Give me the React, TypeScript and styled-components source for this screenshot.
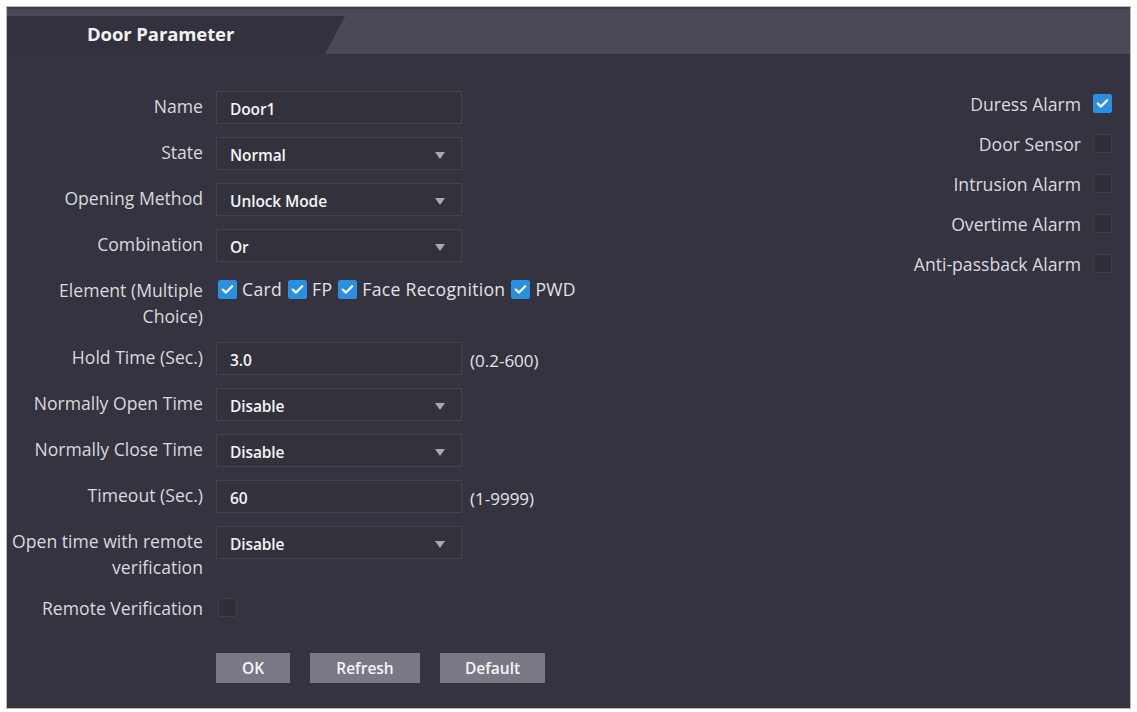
import React from "react";
import styled, { createGlobalStyle } from "styled-components";

const GlobalStyle = createGlobalStyle`
  html, body {
    margin: 0;
    padding: 0;
    background: #ffffff;
  }
  body {
    font-family: "Open Sans", "Liberation Sans", sans-serif;
  }
`;

type Field =
  | { kind: "text"; label: string; value: string; hint?: string }
  | { kind: "select"; label: string; value: string }
  | { kind: "checks"; label: string; items: string[] }
  | { kind: "check"; label: string; checked: boolean };

const fields: Field[] = [
  { kind: "text", label: "Name", value: "Door1" },
  { kind: "select", label: "State", value: "Normal" },
  { kind: "select", label: "Opening Method", value: "Unlock Mode" },
  { kind: "select", label: "Combination", value: "Or" },
  {
    kind: "checks",
    label: "Element (Multiple Choice)",
    items: ["Card", "FP", "Face Recognition", "PWD"],
  },
  { kind: "text", label: "Hold Time (Sec.)", value: "3.0", hint: "(0.2-600)" },
  { kind: "select", label: "Normally Open Time", value: "Disable" },
  { kind: "select", label: "Normally Close Time", value: "Disable" },
  { kind: "text", label: "Timeout (Sec.)", value: "60", hint: "(1-9999)" },
  { kind: "select", label: "Open time with remote verification", value: "Disable" },
  { kind: "check", label: "Remote Verification", checked: false },
];

const alarms = [
  { name: "Duress Alarm", checked: true },
  { name: "Door Sensor", checked: false },
  { name: "Intrusion Alarm", checked: false },
  { name: "Overtime Alarm", checked: false },
  { name: "Anti-passback Alarm", checked: false },
];

const Check: React.FC<{ checked: boolean }> = ({ checked }) => (
  <Box $checked={checked}>
    {checked && (
      <svg width="13" height="11" viewBox="0 0 13 11">
        <path
          d="M1.8 5.6 L5 8.6 L11.2 2.2"
          fill="none"
          stroke="#ffffff"
          strokeWidth="2.2"
          strokeLinecap="round"
          strokeLinejoin="round"
        />
      </svg>
    )}
  </Box>
);

const renderControl = (f: Field) => {
  switch (f.kind) {
    case "text":
      return (
        <ControlLine>
          <Input>{f.value}</Input>
          {f.hint && <Hint>{f.hint}</Hint>}
        </ControlLine>
      );
    case "select":
      return (
        <Input>
          {f.value}
          <Arrow />
        </Input>
      );
    case "checks":
      return (
        <ChecksLine>
          {f.items.map((it) => (
            <CheckItem key={it}>
              <Check checked />
              {it}
            </CheckItem>
          ))}
        </ChecksLine>
      );
    case "check":
      return (
        <ChecksLine>
          <Check checked={f.checked} />
        </ChecksLine>
      );
  }
};

export default function App() {
  return (
    <>
      <GlobalStyle />
      <Page>
        <Panel>
          <Header>
            <Tab>Door Parameter</Tab>
          </Header>
          <Body>
            <FormCol>
              <Form>
                {fields.map((f) => (
                  <React.Fragment key={f.label}>
                    <Label>{f.label}</Label>
                    {renderControl(f)}
                  </React.Fragment>
                ))}
              </Form>
              <Buttons>
                <Button $w={74}>OK</Button>
                <Button $w={110}>Refresh</Button>
                <Button $w={105}>Default</Button>
              </Buttons>
            </FormCol>
            <AlarmCol>
              {alarms.map((a) => (
                <AlarmRow key={a.name}>
                  {a.name}
                  <Check checked={a.checked} />
                </AlarmRow>
              ))}
            </AlarmCol>
          </Body>
        </Panel>
      </Page>
    </>
  );
}

const Page = styled.div`
  width: 1137px;
  height: 712px;
  box-sizing: border-box;
  padding: 6px 6px 3px 6px;
`;

const Panel = styled.div`
  height: 100%;
  box-sizing: border-box;
  border: 1px solid #b9b9be;
  background: #35333f;
  display: flex;
  flex-direction: column;
`;

const Header = styled.div`
  height: 47px;
  flex: none;
  box-sizing: border-box;
  border-top: 2px solid #3c3a46;
  background: #4b4957;
  display: flex;
  align-items: flex-end;
`;

const Tab = styled.div`
  width: 338px;
  height: 38px;
  box-sizing: border-box;
  padding: 0 0 4px 80px;
  display: flex;
  align-items: center;
  background: #33313d;
  clip-path: polygon(0 0, 100% 0, calc(100% - 20px) 100%, 0 100%);
  color: #f2f2f4;
  font-weight: 700;
  font-size: 18.5px;
  letter-spacing: -0.1px;
`;

const Body = styled.div`
  flex: 1;
  display: flex;
  justify-content: space-between;
  padding: 37px 18px 0 0;
`;

const FormCol = styled.div`
  display: flex;
  flex-direction: column;
`;

const Form = styled.div`
  display: grid;
  grid-template-columns: 196px auto;
  column-gap: 13px;
  row-gap: 13px;
  align-items: start;
`;

const Label = styled.div`
  text-align: right;
  padding-top: 2px;
  line-height: 26px;
  font-size: 17.6px;
  color: #d9d9de;
`;

const ControlLine = styled.div`
  display: flex;
  align-items: center;
  gap: 8px;
`;

const Input = styled.div`
  position: relative;
  width: 246px;
  height: 33px;
  box-sizing: border-box;
  border: 1px solid #44424f;
  background: #33313c;
  padding: 3px 0 0 13px;
  display: flex;
  align-items: center;
  font-size: 15.5px;
  font-weight: 600;
  letter-spacing: -0.1px;
  color: #f4f4f6;
`;

const Arrow = styled.span`
  position: absolute;
  right: 16px;
  top: 14px;
  width: 0;
  height: 0;
  border-left: 5px solid transparent;
  border-right: 5px solid transparent;
  border-top: 7px solid #a9a7b1;
`;

const Hint = styled.span`
  font-size: 17px;
  color: #e4e4e8;
  padding-top: 3px;
`;

const ChecksLine = styled.div`
  height: 28px;
  display: flex;
  align-items: center;
  gap: 6px;
  padding-left: 2px;
`;

const CheckItem = styled.span`
  display: inline-flex;
  align-items: center;
  gap: 5px;
  font-size: 17.6px;
  letter-spacing: 0.3px;
  color: #e2e2e6;
`;

const Box = styled.span<{ $checked: boolean }>`
  width: 19px;
  height: 19px;
  flex: none;
  box-sizing: border-box;
  border-radius: 2px;
  display: inline-flex;
  align-items: center;
  justify-content: center;
  background: ${(p) => (p.$checked ? "#2b8fe0" : "#302e39")};
  border: 1px solid ${(p) => (p.$checked ? "#2b8fe0" : "#403e4b")};
`;

const Buttons = styled.div`
  display: flex;
  gap: 20px;
  margin: 32px 0 0 209px;
`;

const Button = styled.button<{ $w: number }>`
  width: ${(p) => p.$w}px;
  height: 30px;
  border: none;
  background: #7a7884;
  color: #f6f6f8;
  font-family: "Open Sans", "Liberation Sans", sans-serif;
  font-size: 15.5px;
  font-weight: 600;
  padding: 0;
`;

const AlarmCol = styled.div`
  display: flex;
  flex-direction: column;
  align-items: flex-end;
  gap: 21px;
  padding-top: 3px;
`;

const AlarmRow = styled.div`
  display: flex;
  align-items: center;
  gap: 12px;
  height: 19px;
  font-size: 17.6px;
  color: #dadade;
`;
